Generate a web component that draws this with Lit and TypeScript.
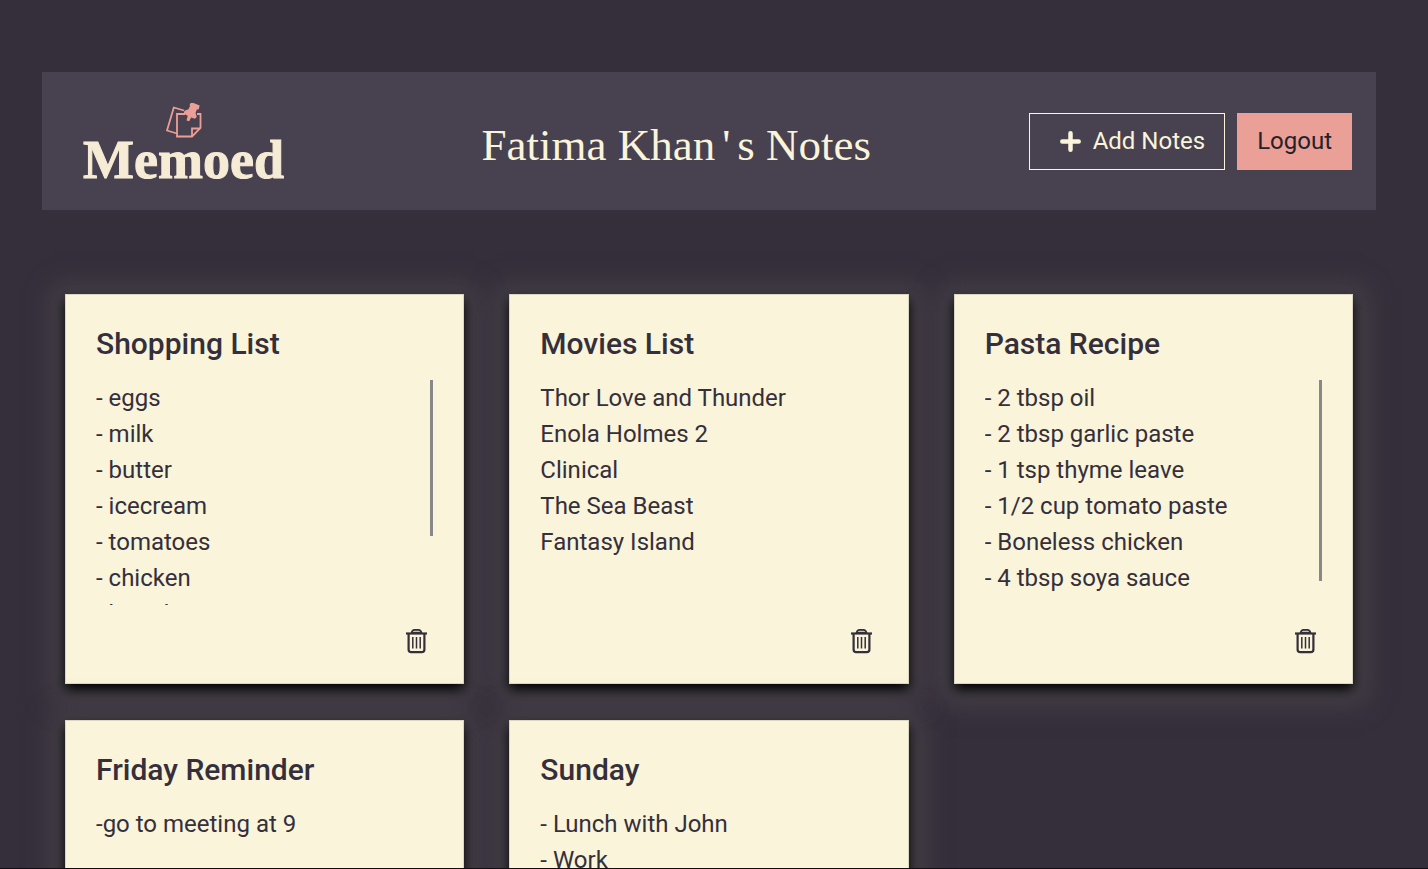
import { LitElement, html, css, nothing } from "lit";
import { customElement, property } from "lit/decorators.js";
import { styleMap } from "lit/directives/style-map.js";

interface Note {
  title: string;
  text: string;
  /** Share of the text that is visible, in percent; 100 hides the scroll thumb. */
  visible: number;
}

const NOTES: Note[] = [
  {
    title: "Shopping List",
    text: "- eggs\n- milk\n- butter\n- icecream\n- tomatoes\n- chicken\n- bread",
    visible: 69.4,
  },
  {
    title: "Movies List",
    text: "Thor Love and Thunder\nEnola Holmes 2\nClinical\nThe Sea Beast\nFantasy Island",
    visible: 100,
  },
  {
    title: "Pasta Recipe",
    text: "- 2 tbsp oil\n- 2 tbsp garlic paste\n- 1 tsp thyme leave\n- 1/2 cup tomato paste\n- Boneless chicken\n- 4 tbsp soya sauce",
    visible: 89.3,
  },
  { title: "Friday Reminder", text: "-go to meeting at 9", visible: 100 },
  { title: "Sunday", text: "- Lunch with John\n- Work", visible: 100 },
];

@customElement("note-card")
export class NoteCard extends LitElement {
  @property() heading = "";
  @property() text = "";
  @property({ type: Number }) visible = 100;

  static styles = css`
    :host {
      display: block;
      min-width: 0;
    }
    .card {
      display: flex;
      flex-direction: column;
      box-sizing: border-box;
      height: 100%;
      padding: 31px 30px 22px;
      border: 1px solid #dad6c1;
      background: #f9f4da;
      color: #352f3b;
      box-shadow:
        0 6px 12px 0 #000,
        0 6px 24px 12px #4a454c;
    }
    .title {
      margin: 0 0 18px;
      font-size: 30px;
      font-weight: 500;
      line-height: 36px;
    }
    .body {
      display: flex;
      height: 225px;
    }
    .text {
      flex: 1;
      min-width: 0;
      overflow-x: hidden;
      overflow-y: auto;
      scrollbar-width: none;
      font-size: 24px;
      line-height: 36px;
      white-space: pre-wrap;
    }
    .thumb {
      flex: none;
      width: 3px;
      background: #888;
    }
    .delete {
      align-self: flex-end;
      display: block;
      margin: 16px 0 0;
      padding: 6px;
      border: 0;
      background: none;
      color: inherit;
      cursor: pointer;
    }
    .icon {
      display: block;
      width: 21px;
      height: 28px;
    }
  `;

  render() {
    return html`
      <article class="card">
        <h2 class="title">${this.heading}</h2>
        <div class="body">
          <div class="text">${this.text}</div>
          ${this.visible < 100
            ? html`<div class="thumb" style=${styleMap({ height: `${this.visible}%` })}></div>`
            : nothing}
        </div>
        <button class="delete" aria-label="Delete ${this.heading}">
          <svg class="icon" viewBox="0 0 21 28" fill="none" stroke="currentColor" stroke-linejoin="round">
            <path d="M5.500 6C6 3.600 7 2.800 8.500 2.800h4c1.500 0 2.500.8 3 3.200z" fill="currentColor" fill-opacity=".25" stroke-width="1.800" />
            <path d="M0 6.500h21" stroke-width="2.200" />
            <path d="M2.600 7v15.500q0 2.700 2.700 2.700h10.400q2.700 0 2.700-2.700v-15.500" stroke-width="2.200" />
            <path d="M6.800 10v11.500M10.500 10v11.500M14.200 10v11.500" stroke-width="1.500" />
          </svg>
        </button>
      </article>
    `;
  }
}

@customElement("app-root")
export class AppRoot extends LitElement {
  static styles = css`
    :host {
      display: block;
      box-sizing: border-box;
      height: 100vh;
      overflow: hidden;
      padding: 72px 52px 0 42px;
      border-bottom: 1px solid #0f0d10;
      background: #352f3b;
      font-family: Roboto, "Liberation Sans", sans-serif;
    }
    .bar {
      display: flex;
      align-items: center;
      justify-content: space-between;
      box-sizing: border-box;
      min-height: 138px;
      padding: 24px 24px 24px 41px;
      background: #48414f;
    }
    .brand {
      display: flex;
      flex-direction: column;
      align-items: center;
      margin-right: 40px;
      padding-top: 2px;
      color: #f6ecd6;
      font-family: "Liberation Serif", serif;
      font-size: 54px;
      font-weight: 700;
      line-height: 42px;
      text-decoration: none;
      -webkit-text-stroke: 1px #f6ecd6;
    }
    .mark {
      display: block;
      width: 38px;
      height: 36px;
    }
    .heading {
      margin: 0;
      padding-top: 8px;
      color: #f9f4da;
      font-family: "Liberation Serif", serif;
      font-size: 45px;
      font-weight: 400;
      line-height: 54px;
    }
    .apostrophe {
      padding: 0 7px;
    }
    .actions {
      display: flex;
      gap: 12px;
    }
    .btn {
      display: flex;
      align-items: center;
      gap: 12px;
      padding: 9px 19px;
      border: 1px solid #f9f4da;
      background: none;
      color: #f9f4da;
      font: 400 24px/37px Roboto, "Liberation Sans", sans-serif;
      cursor: pointer;
    }
    .add {
      padding-left: 30px;
    }
    .logout {
      border-color: #ea9f97;
      background: #ea9f97;
      color: #24222a;
    }
    .plus {
      display: block;
      width: 21px;
      height: 21px;
    }
    .notes {
      display: grid;
      grid-template-columns: repeat(3, minmax(0, 1fr));
      gap: 36px 45px;
      padding: 84px 23px 36px;
    }
  `;

  render() {
    return html`
      <header class="bar">
        <a class="brand" href="#">
          <svg class="mark" viewBox="-2 1 38 36" fill="none" stroke="#ea9f97" stroke-width="1.800" aria-hidden="true">
            <path d="M18 8.500L7.800 5.500 1 28.500l10 3" />
            <path d="M19 12h-8v22.500h15l8.500-8.500v-14h-3.500" />
            <path d="M26 34v-7.500h8" />
            <path d="M25.600 1.200l7 2.800-.6 2.400-1.800.4-1.600 4.200 1.200 3.600-1 1.200-4.200-1.500-1.800 3.900-1.200-.4 1.200-4.400-4-2.300.4-1.600 3.800-1.300 2-4-.400-1.300z" fill="#ea9f97" />
          </svg>
          Memoed
        </a>
        <h1 class="heading">Fatima Khan<span class="apostrophe">'</span>s Notes</h1>
        <div class="actions">
          <button class="btn add">
            <svg class="plus" viewBox="0 0 21 21" fill="none" stroke="currentColor" stroke-width="4.500" stroke-linecap="round" aria-hidden="true">
              <path d="M10.500 2.300v16.400M2.300 10.500h16.400" />
            </svg>
            Add Notes
          </button>
          <button class="btn logout">Logout</button>
        </div>
      </header>
      <main class="notes">
        ${NOTES.map(
          (n) => html`<note-card .heading=${n.title} .text=${n.text} .visible=${n.visible}></note-card>`,
        )}
      </main>
    `;
  }
}
